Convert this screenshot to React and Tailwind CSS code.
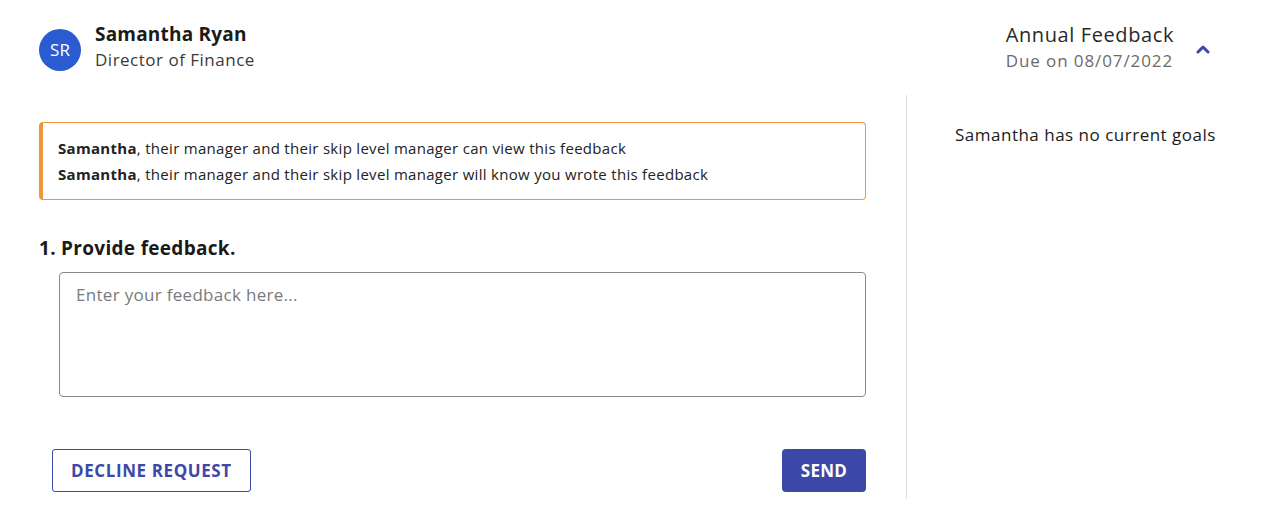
import React from "react";

const font = { fontFamily: "'Open Sans', 'Noto Sans', sans-serif" };

const App = () => {
  return (
    <div className="w-[1272px] h-[520px] bg-white text-[#1a1a1a]" style={font}>
      {/* header */}
      <div className="h-[95px] flex items-start justify-between pl-[39px] pr-[62px] pt-[22px]">
        <div className="flex items-center gap-[14px]">
          <div className="w-[42px] h-[42px] rounded-full bg-[#2b5bd0] flex items-center justify-center text-white text-[17px] mt-[5px]">
            SR
          </div>
          <div className="flex flex-col">
            <span className="text-[19px] font-bold leading-[25px] tracking-[0.2px]">Samantha Ryan</span>
            <span className="text-[17px] text-[#3a3a3a] leading-[26px] tracking-[0.5px]">Director of Finance</span>
          </div>
        </div>
        <div className="flex items-center gap-[22px]">
          <div className="flex flex-col">
            <span className="text-[20px] text-[#2a2a2a] leading-[26px] tracking-[0.6px]">Annual Feedback</span>
            <span className="text-[17px] text-[#6b6b6b] leading-[26px] tracking-[0.9px]">Due on 08/07/2022</span>
          </div>
          <svg width="14" height="10" viewBox="0 0 14 10" className="mt-[2px]">
            <path d="M2 8 L7 3 L12 8" fill="none" stroke="#3c48a8" strokeWidth="3" strokeLinecap="round" strokeLinejoin="round" />
          </svg>
        </div>
      </div>

      <div className="flex">
        {/* left column */}
        <div className="w-[867px] pl-[39px] pt-[27px] pr-[1px]">
          <div className="border border-[#f0963a] border-l-4 rounded-[4px] px-[15px] py-[12px] text-[15px] leading-[26px] tracking-[0.3px] text-[#222]">
            <p><b>Samantha</b>, their manager and their skip level manager can view this feedback</p>
            <p><b>Samantha</b>, their manager and their skip level manager will know you wrote this feedback</p>
          </div>
          <h2 className="text-[19px] font-bold mt-[36px] leading-[24px] tracking-[0.3px]">1. Provide feedback.</h2>
          <div className="pl-[20px] mt-[12px]">
            <textarea
              placeholder="Enter your feedback here..."
              className="w-full h-[125px] border border-[#8a8a8a] rounded-[4px] px-[16px] py-[9px] text-[17px] tracking-[0.3px] placeholder-[#7a7a7a] resize-none outline-none"
            />
          </div>
          <div className="flex justify-between items-center pl-[13px] mt-[46px]">
            <button className="h-[43px] px-[18px] border border-[#3c48a8] rounded-[3px] text-[#3c48a8] text-[17px] font-bold tracking-[0.6px]">
              DECLINE REQUEST
            </button>
            <button className="h-[43px] w-[84px] bg-[#3c48a8] rounded-[4px] text-white text-[17px] font-bold tracking-[0.3px]">
              SEND
            </button>
          </div>
        </div>
        <div className="ml-[39px] w-px bg-[#dcdce2] h-[404px]" />
        {/* right column */}
        <div className="pl-[48px] pt-[27px]">
          <p className="text-[17px] text-[#1a1a1a] tracking-[0.5px]">Samantha has no current goals</p>
        </div>
      </div>
    </div>
  );
};

export default App;
